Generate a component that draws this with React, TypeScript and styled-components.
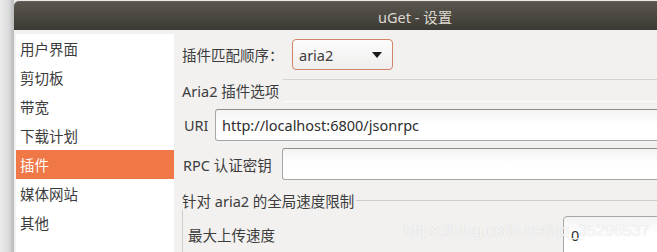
import React from "react";
import styled, { createGlobalStyle } from "styled-components";

const Global = createGlobalStyle`
  html, body { margin: 0; padding: 0; }
  body {
    width: 657px; height: 252px; overflow: hidden;
    background: #e9e9e9;
    font-family: "Noto Sans", "Noto Sans CJK SC", sans-serif;
  }
`;

const Page = styled.div`
  position: relative;
  display: flex;
  width: 657px;
  height: 252px;
  overflow: hidden;
`;

const Shadow = styled.div`
  flex: 0 0 14px;
  background: linear-gradient(to right, #ececec 0%, #dcdcdc 60%, #b9b9b9 100%);
`;

const Window = styled.div`
  flex: 0 0 780px;
  display: flex;
  flex-direction: column;
  margin-top: 1px;
  border-top-left-radius: 5px;
  overflow: hidden;
  background: #f2f1f0;
`;

const TitleBar = styled.div`
  flex: 0 0 29px;
  display: flex;
  align-items: center;
  padding-left: 364px;
  background: linear-gradient(#5a564e 0%, #4b4842 50%, #3d3a35 100%);
  border-top: 1px solid #66625a;
  box-sizing: border-box;
  color: #dcd8cf;
  font-size: 14.5px;
`;

const Body = styled.div`
  flex: 1 1 auto;
  min-height: 0;
  display: flex;
  padding: 4px 0 0 2px;
  overflow: hidden;
`;

const Sidebar = styled.div`
  flex: 0 0 158px;
  background: #ffffff;
  display: flex;
  flex-direction: column;
`;

const NavItem = styled.div<{ $active?: boolean }>`
  flex: 0 0 29px;
  display: flex;
  align-items: center;
  padding-left: 4px;
  font-size: 14.5px;
  color: ${(p) => (p.$active ? "#ffffff" : "#3c3c3c")};
  background: ${(p) => (p.$active ? "#f07746" : "transparent")};
`;

const Content = styled.div`
  flex: 1;
  display: flex;
  flex-direction: column;
  padding-left: 8px;
  color: #3c3c3c;
  font-size: 14.5px;
  & > * { flex-shrink: 0; }
`;

const Row = styled.div<{ $mt: number }>`
  display: flex;
  align-items: center;
  margin-top: ${(p) => p.$mt}px;
`;

const Label = styled.span<{ $pl?: number; $w?: number }>`
  padding-left: ${(p) => p.$pl ?? 0}px;
  width: ${(p) => (p.$w ? `${p.$w}px` : "auto")};
  flex: 0 0 auto;
  white-space: nowrap;
`;

const Combo = styled.div`
  width: 101px;
  height: 31px;
  box-sizing: border-box;
  display: flex;
  align-items: center;
  justify-content: space-between;
  padding: 0 10px 0 6px;
  border: 1px solid #d28566;
  border-radius: 4px;
  background: linear-gradient(#fcfcfc, #efeeed);
`;

const Arrow = styled.span`
  width: 0;
  height: 0;
  border-left: 5px solid transparent;
  border-right: 5px solid transparent;
  border-top: 6px solid #1a1a1a;
`;

const SectionRow = styled.div`
  display: flex;
  align-items: center;
  margin-top: 9px;
  height: 23px;
`;

const SectionRule = styled.div`
  flex: 1;
  align-self: stretch;
  margin-left: 4px;
  border-top: 1px solid #d5d3cf;
  border-bottom: 1px solid #fbfbfa;
`;

const Entry = styled.div`
  flex: 1;
  height: 32px;
  box-sizing: border-box;
  display: flex;
  align-items: center;
  padding-left: 6px;
  border: 1px solid #a9a7a4;
  border-top-color: #8f8d8a;
  border-radius: 3px;
  background: linear-gradient(#f3f3f3 0%, #ffffff 45%);
  color: #2e2e2e;
`;

const Frame = styled.div`
  display: flex;
  flex-direction: column;
  margin-top: 10px;
`;

const FrameHead = styled.div`
  display: flex;
  align-items: center;
  height: 20px;
`;

const FrameLine = styled.div`
  flex: 1;
  border-top: 1px solid #cfcdc9;
  margin-left: 2px;
`;

const FrameBody = styled.div`
  border-left: 1px solid #cfcdc9;
  display: flex;
  flex-direction: column;
  padding: 6px 0 0 5px;
  height: 60px;
`;

const SpinRow = styled.div`
  display: flex;
  align-items: flex-start;
`;

const SpinLabel = styled.span`
  width: 375px;
  padding-top: 8px;
`;

const Spin = styled.div`
  flex: 1;
  height: 40px;
  box-sizing: border-box;
  padding: 8px 0 0 7px;
  border: 1px solid #a9a7a4;
  border-radius: 4px;
  background: linear-gradient(#f3f3f3 0%, #ffffff 45%);
  color: #2e2e2e;
`;

const Watermark = styled.div`
  position: absolute;
  left: 404px;
  top: 222px;
  font-family: "Liberation Sans", Arial, sans-serif;
  font-size: 16px;
  color: rgba(255, 255, 255, 0.85);
  text-shadow: 0 0 1px rgba(120, 120, 120, 0.35);
  white-space: nowrap;
`;

const navItems = ["用户界面", "剪切板", "带宽", "下载计划", "插件", "媒体网站", "其他"];

export default function App() {
  return (
    <>
      <Global />
      <Page>
        <Shadow />
        <Window>
          <TitleBar>uGet - 设置</TitleBar>
          <Body>
            <Sidebar>
              {navItems.map((n) => (
                <NavItem key={n} $active={n === "插件"}>
                  {n}
                </NavItem>
              ))}
            </Sidebar>
            <Content>
              <Row $mt={5}>
                <Label $w={110}>插件匹配顺序：</Label>
                <Combo>
                  <span>aria2</span>
                  <Arrow />
                </Combo>
              </Row>
              <SectionRow>
                <Label>Aria2 插件选项</Label>
                <SectionRule />
              </SectionRow>
              <Row $mt={7}>
                <Label $pl={2} $w={31}>URI</Label>
                <Entry>http://localhost:6800/jsonrpc</Entry>
              </Row>
              <Row $mt={7}>
                <Label $pl={1} $w={99}>RPC 认证密钥</Label>
                <Entry />
              </Row>
              <Frame>
                <FrameHead>
                  <Label>针对 aria2 的全局速度限制</Label>
                  <FrameLine />
                </FrameHead>
                <FrameBody>
                  <SpinRow>
                    <SpinLabel>最大上传速度</SpinLabel>
                    <Spin>0</Spin>
                  </SpinRow>
                </FrameBody>
              </Frame>
            </Content>
          </Body>
        </Window>
        <Watermark>https://blog.csdn.net/qq_35296537</Watermark>
      </Page>
    </>
  );
}
